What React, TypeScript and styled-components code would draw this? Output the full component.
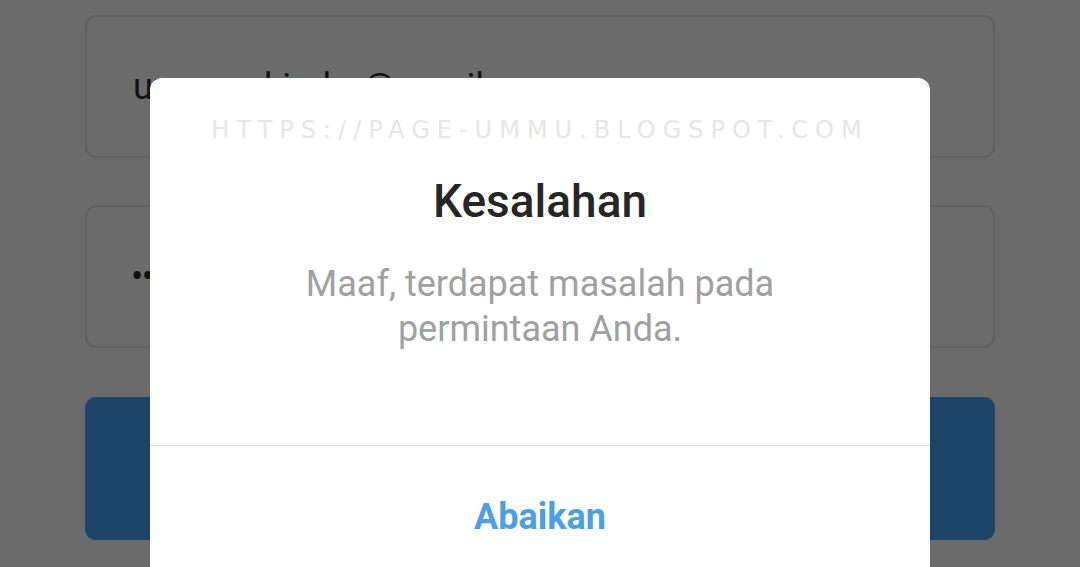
import React from "react";
import styled, { createGlobalStyle } from "styled-components";

const Global = createGlobalStyle`
  html, body { margin: 0; padding: 0; }
  body { background: #6b6b6b; font-family: Roboto, "Noto Sans", sans-serif; overflow: hidden; }
`;

const Screen = styled.div`
  position: relative;
  width: 1080px;
  height: 567px;
  overflow: hidden;
  background: #6b6b6b;
`;

const Form = styled.div`
  display: flex;
  flex-direction: column;
  gap: 47px;
  padding: 15px 85px 0;
`;

const Field = styled.div`
  box-sizing: border-box;
  height: 143px;
  border: 2px solid #606060;
  border-radius: 11px;
  display: flex;
  align-items: center;
  padding: 0 46px;
  font-size: 36px;
  color: #111;
  white-space: nowrap;
`;

const Dots = styled.span`
  font-size: 36px;
  letter-spacing: -1.5px;
  margin-left: -2px;
`;

const Submit = styled.div`
  height: 143px;
  border-radius: 11px;
  background: #1c4466;
  margin-top: 2px;
`;

const Dialog = styled.div`
  position: absolute;
  left: 150px;
  top: 78px;
  width: 780px;
  height: 520px;
  background: #fff;
  border-radius: 12px;
  display: flex;
  flex-direction: column;
  align-items: center;
`;

const Watermark = styled.div`
  margin-top: 38px;
  font-family: "DejaVu Sans", sans-serif;
  font-size: 24px;
  letter-spacing: 7px;
  color: #e6e6e6;
  height: 28px;
  line-height: 28px;
  white-space: nowrap;
`;

const Title = styled.h2`
  margin: 30px 0 0;
  font-family: Roboto, sans-serif;
  font-weight: 500;
  font-size: 46px;
  line-height: 54px;
  color: #262626;
`;

const Message = styled.p`
  margin: 34px 0 0;
  font-size: 36px;
  line-height: 45px;
  color: #a0a0a0;
  text-align: center;
  width: 560px;
`;

const Divider = styled.div`
  margin-top: 93px;
  width: 100%;
  height: 1px;
  background: #dbdbdb;
`;

const Action = styled.button`
  margin-top: 49px;
  border: 0;
  background: none;
  font-family: Roboto, sans-serif;
  font-weight: 700;
  font-size: 36px;
  line-height: 44px;
  color: #4a9fe6;
  padding: 0;
`;

export default function App() {
  return (
    <Screen>
      <Global />
      <Form>
        <Field>ummu.skindar@gmail.com</Field>
        <Field><Dots>••••••••</Dots></Field>
        <Submit />
      </Form>
      <Dialog>
        <Watermark>HTTPS://PAGE-UMMU.BLOGSPOT.COM</Watermark>
        <Title>Kesalahan</Title>
        <Message>Maaf, terdapat masalah pada permintaan Anda.</Message>
        <Divider />
        <Action>Abaikan</Action>
      </Dialog>
    </Screen>
  );
}
